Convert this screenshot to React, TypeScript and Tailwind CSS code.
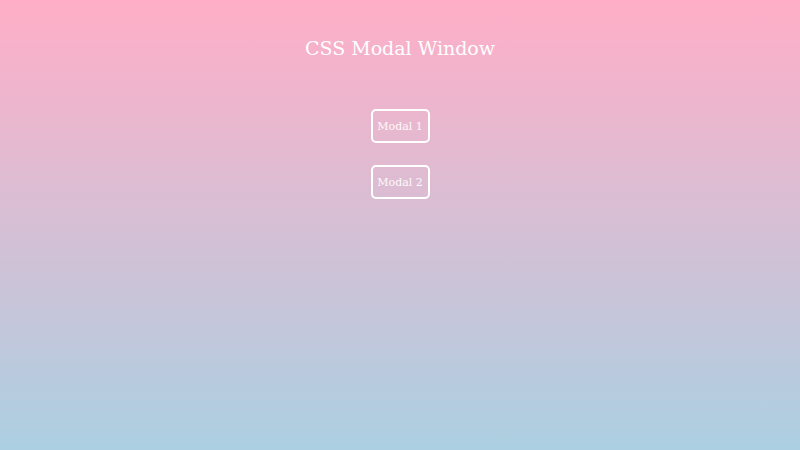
export default function App() {
  return (
    <div
      className="w-[800px] h-[450px] flex flex-col items-center bg-[linear-gradient(to_bottom,#ffaec7,#acd0e2)] text-white"
      style={{ fontFamily: '"DejaVu Serif", serif' }}
    >
      <h1 className="mt-[36px] text-[19px] leading-[24px] font-light">CSS Modal Window</h1>
      <div className="mt-[49px] flex flex-col items-center gap-[22px]">
        <button className="w-[59px] h-[34px] pt-[2px] border-2 border-white rounded-[5px] text-[11px] text-white/90">
          Modal 1
        </button>
        <button className="w-[59px] h-[34px] pt-[2px] border-2 border-white rounded-[5px] text-[11px] text-white/90">
          Modal 2
        </button>
      </div>
    </div>
  );
}
